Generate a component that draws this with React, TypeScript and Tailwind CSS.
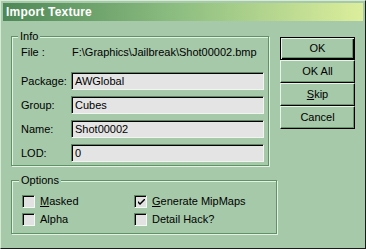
import React from "react";

const BG = "bg-[#a6c9a9]";

function Field({ label, value }: { label: string; value: string }) {
  return (
    <>
      <div className="h-[18px] flex items-center">{label}</div>
      <div className="h-[18px] w-[193px] bg-[#e4e4e4] border border-t-[#5e8662] border-l-[#5e8662] border-b-[#eef6ee] border-r-[#eef6ee] shadow-[inset_1px_1px_0_#000] flex items-center pl-[3px] leading-none">
        {value}
      </div>
    </>
  );
}

function Check({ checked, children }: { checked?: boolean; children: React.ReactNode }) {
  return (
    <div className="flex items-center h-[13px] gap-[5px]">
      <div className="w-[13px] h-[13px] bg-[#e2e2e2] border border-t-[#5e8662] border-l-[#5e8662] border-b-[#f2f8f2] border-r-[#f2f8f2] shadow-[inset_1px_1px_0_#000] flex items-center justify-center">
        {checked && (
          <svg width="7" height="7" viewBox="0 0 7 7" className="ml-[1px] mt-[1px]">
            <path d="M0 2 L0 4 L2 6 L7 1 L7 -1 L2 4 Z" fill="#000" />
          </svg>
        )}
      </div>
      <span className="leading-none">{children}</span>
    </div>
  );
}

function Btn({ children, def }: { children: React.ReactNode; def?: boolean }) {
  return (
    <div
      className={
        def
          ? "w-[75px] h-[23px] border border-black shadow-[inset_1px_1px_0_#e8f4e8,inset_-1px_-1px_0_#000,inset_-2px_-2px_0_#6b946f] flex items-center justify-center"
          : "w-[75px] h-[23px] border border-t-[#e8f4e8] border-l-[#e8f4e8] border-r-black border-b-black shadow-[inset_-1px_-1px_0_#6b946f] flex items-center justify-center"
      }
    >
      {children}
    </div>
  );
}

export default function App() {
  return (
    <div
      className={`w-[366px] h-[249px] ${BG} border border-t-[#d6ead6] border-l-[#d6ead6] border-r-[#1a1a1a] border-b-[#1a1a1a] p-[2px] font-['Liberation_Sans',Arial,sans-serif] text-[11px] text-black overflow-hidden`}
    >
      <div className="h-[18px] bg-gradient-to-r from-[#4e8858] via-[#8fbf82] to-[#dcee9c] flex items-center pl-[3px]">
        <span className="text-white font-bold text-[12px] tracking-[0.2px] leading-none">Import Texture</span>
      </div>
      <div className="flex pl-[8px] gap-[3px]">
        <div className="flex flex-col w-[266px]">
          <div className="relative mt-[15px] w-[258px] h-[130px] border border-[#5f9266] shadow-[inset_1px_1px_0_#e4f2e4,1px_1px_0_#e4f2e4]">
            <span className={`absolute -top-[8px] left-[6px] px-[2px] ${BG} leading-[14px]`}>Info</span>
            <div className="grid grid-cols-[50px_193px] gap-y-[6px] pl-[9px] pt-[7px]">
              <div className="h-[16px] flex items-center">File :</div>
              <div className="h-[16px] flex items-center pl-[1px]">F:\Graphics\Jailbreak\Shot00002.bmp</div>
              <div className="col-span-2 h-[3px] -mt-[6px]" />
              <Field label="Package:" value="AWGlobal" />
              <Field label="Group:" value="Cubes" />
              <Field label="Name:" value="Shot00002" />
              <Field label="LOD:" value="0" />
            </div>
          </div>
          <div className="relative mt-[14px] w-[266px] h-[54px] border border-[#5f9266] shadow-[inset_1px_1px_0_#e4f2e4,1px_1px_0_#e4f2e4]">
            <span className={`absolute -top-[8px] left-[7px] px-[2px] ${BG} leading-[14px]`}>Options</span>
            <div className="grid grid-cols-[112px_112px] gap-y-[5px] pl-[10px] pt-[14px]">
              <Check>
                <u>M</u>asked
              </Check>
              <Check checked>
                <u>G</u>enerate MipMaps
              </Check>
              <Check>Alpha</Check>
              <Check>Detail Hack?</Check>
            </div>
          </div>
        </div>
        <div className="flex flex-col mt-[16px]">
          <Btn def>OK</Btn>
          <Btn>OK All</Btn>
          <Btn>
            <span>
              <u>S</u>kip
            </span>
          </Btn>
          <Btn>Cancel</Btn>
        </div>
      </div>
    </div>
  );
}
